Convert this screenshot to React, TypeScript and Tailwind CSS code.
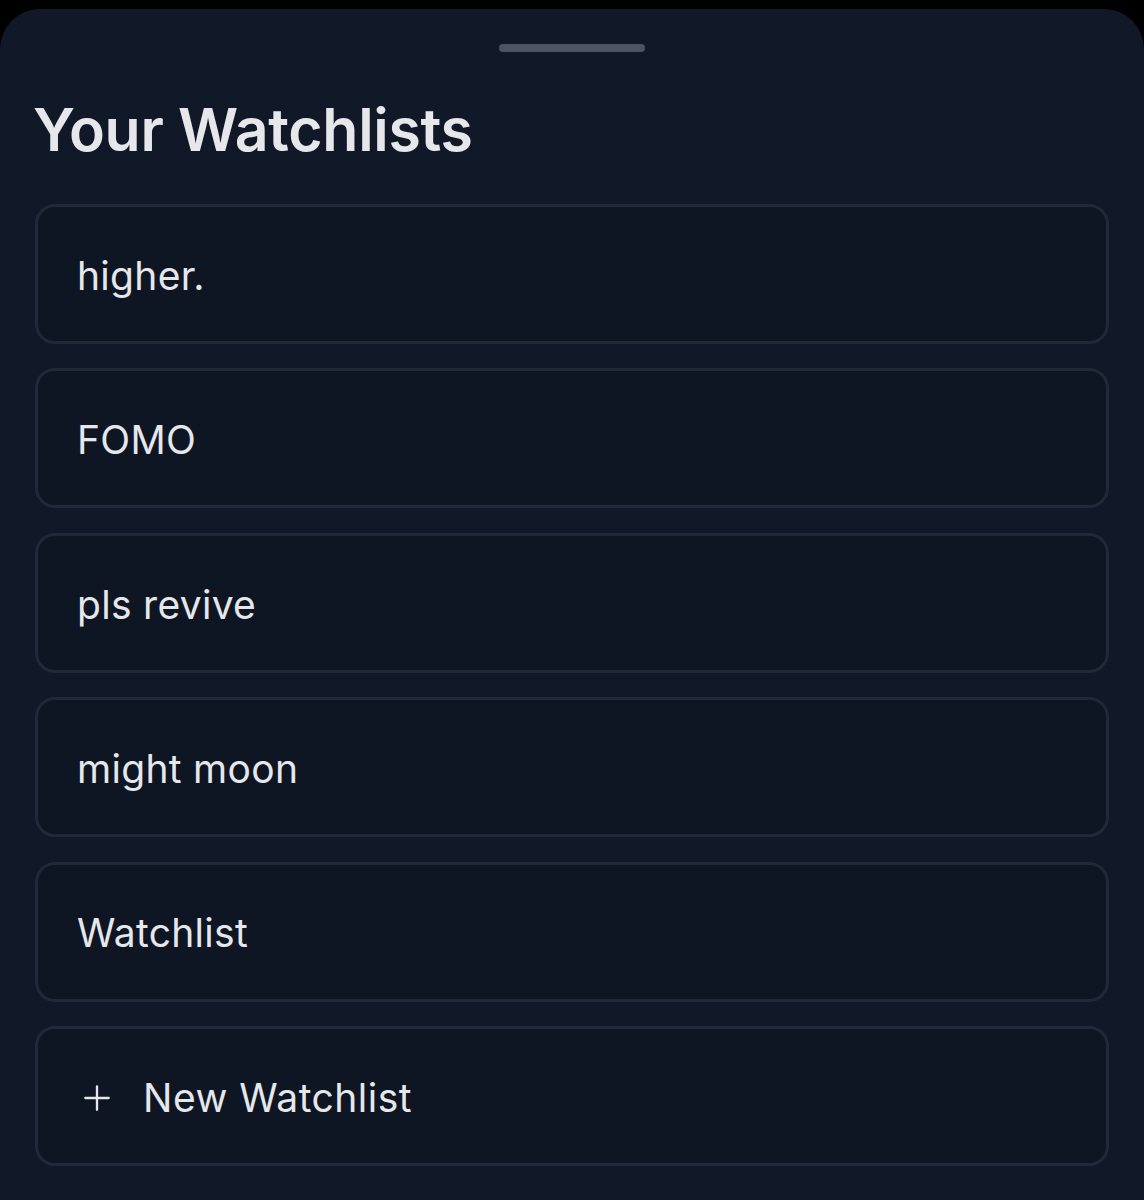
import React from 'react';

const watchlists = ['higher.', 'FOMO', 'pls revive', 'might moon', 'Watchlist'];

export default function App() {
  return (
    <div className="min-h-[1200px] w-[1144px] bg-black pt-[9px]" style={{ fontFamily: 'Inter, "Noto Sans", sans-serif' }}>
      <div className="flex min-h-[1191px] flex-col rounded-t-[40px] bg-[#111827] px-[35px]">
        {/* drag handle */}
        <div className="flex justify-center pt-[35px]">
          <div className="h-[8px] w-[146px] rounded-full bg-[#4b5563]" />
        </div>

        <h1 className="mt-[40px] -ml-[2px] text-[59px] font-semibold leading-[76px] tracking-[-0.3px] text-[#e5e7eb]">
          Your Watchlists
        </h1>

        <div className="mt-[36px] flex flex-col gap-[24.4px]">
          {watchlists.map((name) => (
            <button
              key={name}
              className="flex h-[140px] items-center rounded-[20px] border-[3px] border-[#1f2937] bg-[#0f1623] px-[39px] pt-[4px] text-left text-[39px] tracking-[0.3px] text-[#e5e7eb]"
            >
              {name}
            </button>
          ))}
          <button className="flex h-[140px] items-center rounded-[20px] border-[3px] border-[#1f2937] bg-[#0f1623] px-[39px] pt-[4px] text-left text-[39px] tracking-[0.5px] text-[#e5e7eb]">
            <svg className="ml-[6px] h-[28px] w-[28px]" viewBox="0 0 24 24" fill="none" stroke="currentColor" strokeWidth="2" strokeLinecap="round">
              <path d="M12 2v20M2 12h20" />
            </svg>
            <span className="ml-[32px]">New Watchlist</span>
          </button>
        </div>
      </div>
    </div>
  );
}
